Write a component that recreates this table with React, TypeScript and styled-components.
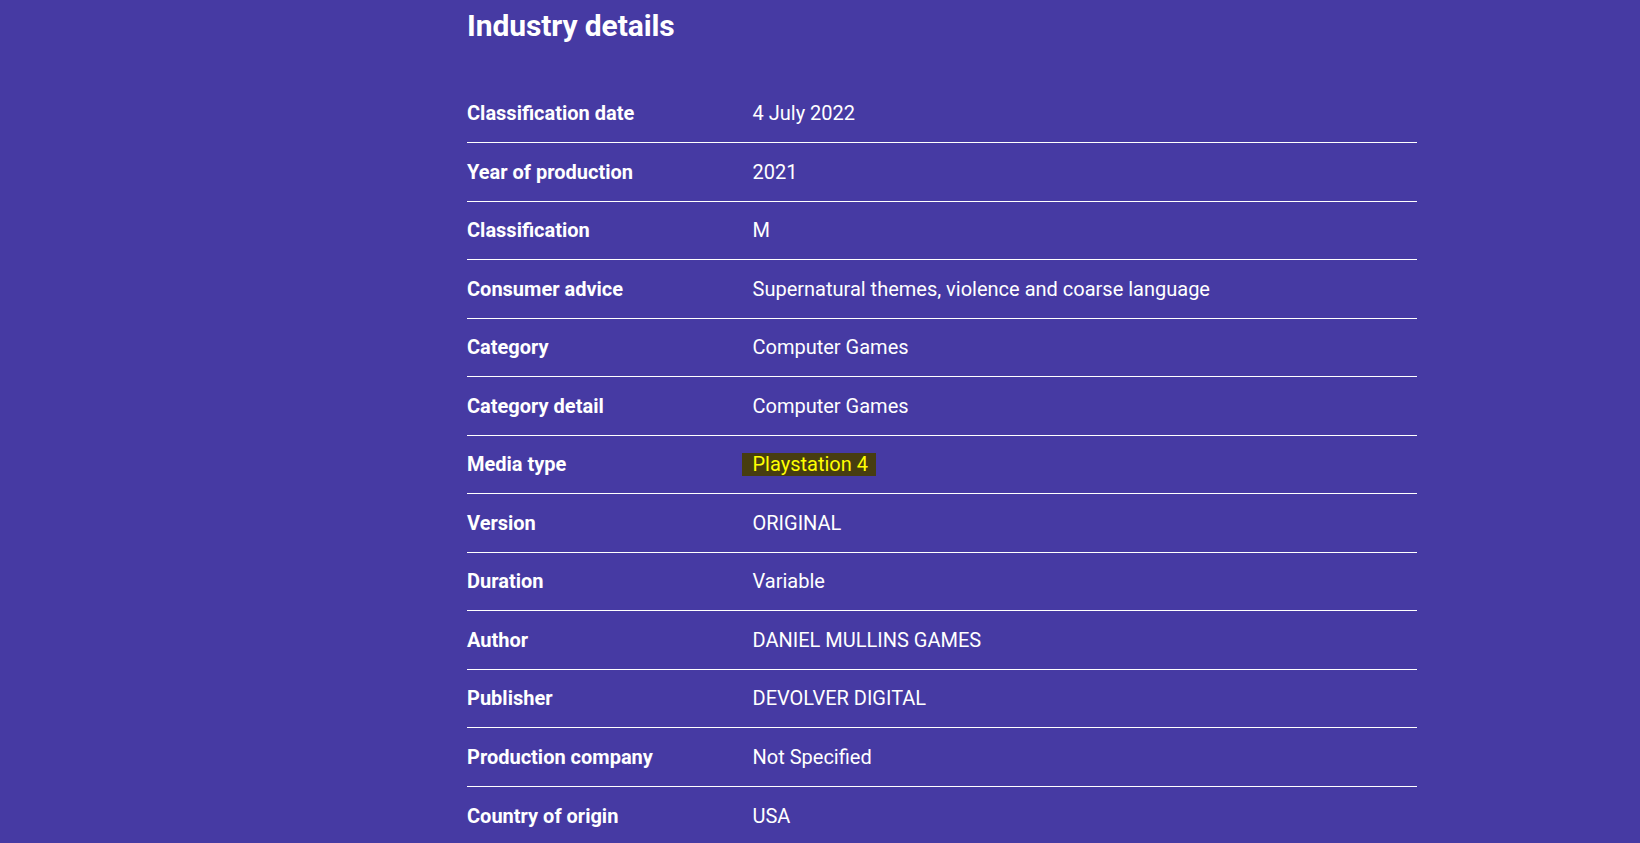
import React from "react";
import styled, { createGlobalStyle } from "styled-components";

const GlobalStyle = createGlobalStyle`
  html, body {
    margin: 0;
    padding: 0;
    background: #463aa3;
  }
  body {
    font-family: Roboto, "Liberation Sans", Arial, sans-serif;
    color: #ffffff;
    overflow: hidden;
  }
`;

const Page = styled.div`
  width: 1640px;
  height: 843px;
  background: #463aa3;
  display: flex;
  justify-content: flex-start;
  padding-left: 467px;
  box-sizing: border-box;
`;

const Section = styled.section`
  width: 950px;
  display: flex;
  flex-direction: column;
`;

const Heading = styled.h2`
  margin: 8px 0 0;
  font-size: 30px;
  line-height: 36px;
  font-weight: 700;
  letter-spacing: -0.1px;
`;

const Table = styled.dl`
  margin: 40.5px 0 0;
  padding: 0;
  display: flex;
  flex-direction: column;
`;

const Row = styled.div`
  display: grid;
  grid-template-columns: 285.5px 1fr;
  align-items: center;
  height: 58.5px;
  box-sizing: border-box;
  border-bottom: 1px solid #ffffff;
  &:last-child {
    border-bottom: none;
  }
`;

const Label = styled.dt`
  margin: 0;
  font-size: 20px;
  font-weight: 700;
  line-height: 26px;
`;

const Value = styled.dd`
  margin: 0;
  font-size: 20px;
  font-weight: 400;
  line-height: 26px;
`;

const Highlight = styled.span`
  display: inline-block;
  background: #473d10;
  color: #ffff00;
  padding: 0 8px 0 11px;
  margin-left: -11px;
  line-height: 23px;
`;

const rows: { label: string; value: string; highlight?: boolean }[] = [
  { label: "Classification date", value: "4 July 2022" },
  { label: "Year of production", value: "2021" },
  { label: "Classification", value: "M" },
  { label: "Consumer advice", value: "Supernatural themes, violence and coarse language" },
  { label: "Category", value: "Computer Games" },
  { label: "Category detail", value: "Computer Games" },
  { label: "Media type", value: "Playstation 4", highlight: true },
  { label: "Version", value: "ORIGINAL" },
  { label: "Duration", value: "Variable" },
  { label: "Author", value: "DANIEL MULLINS GAMES" },
  { label: "Publisher", value: "DEVOLVER DIGITAL" },
  { label: "Production company", value: "Not Specified" },
  { label: "Country of origin", value: "USA" },
];

export default function App() {
  return (
    <>
      <GlobalStyle />
      <Page>
        <Section>
          <Heading>Industry details</Heading>
          <Table>
            {rows.map((r) => (
              <Row key={r.label}>
                <Label>{r.label}</Label>
                <Value>{r.highlight ? <Highlight>{r.value}</Highlight> : r.value}</Value>
              </Row>
            ))}
          </Table>
        </Section>
      </Page>
    </>
  );
}
